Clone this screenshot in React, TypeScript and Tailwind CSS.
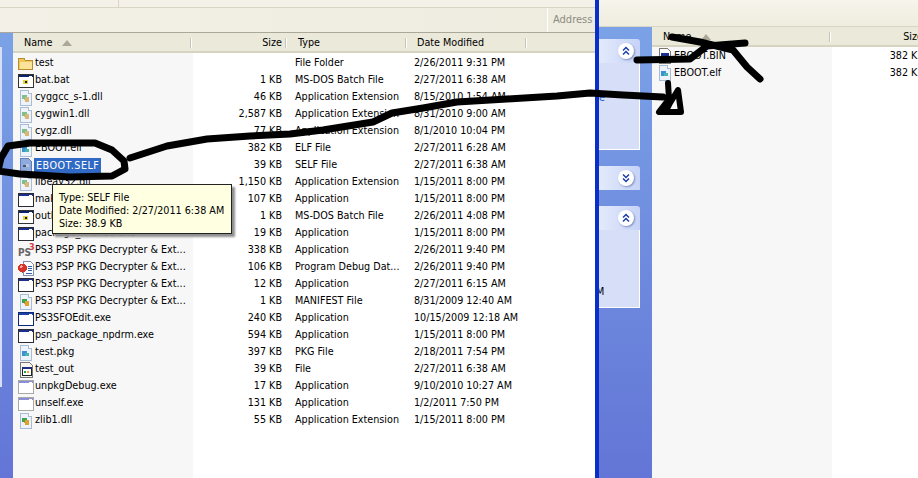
import type { ReactNode } from "react";

type IconKind = "folder" | "bat" | "dll" | "app" | "appGray" | "elf" | "self" | "ps3" | "pdb" | "manifest" | "appDark" | "out" | "bin";

type FileRow = {
  name: string;
  size: string;
  type: string;
  date: string;
  icon: IconKind;
};

const APP_EXT = "Application Extension";
const PKG_TOOL = "PS3 PSP PKG Decrypter & Ext...";

const files: FileRow[] = [
  { name: "test", size: "", type: "File Folder", date: "2/26/2011 9:31 PM", icon: "folder" },
  { name: "bat.bat", size: "1 KB", type: "MS-DOS Batch File", date: "2/27/2011 6:38 AM", icon: "bat" },
  { name: "cyggcc_s-1.dll", size: "46 KB", type: APP_EXT, date: "8/15/2010 1:54 AM", icon: "dll" },
  { name: "cygwin1.dll", size: "2,587 KB", type: APP_EXT, date: "8/31/2010 9:00 AM", icon: "dll" },
  { name: "cygz.dll", size: "77 KB", type: APP_EXT, date: "8/1/2010 10:04 PM", icon: "dll" },
  { name: "EBOOT.elf", size: "382 KB", type: "ELF File", date: "2/27/2011 6:28 AM", icon: "elf" },
  { name: "EBOOT.SELF", size: "39 KB", type: "SELF File", date: "2/27/2011 6:38 AM", icon: "self" },
  { name: "libeay32.dll", size: "1,150 KB", type: APP_EXT, date: "1/15/2011 8:00 PM", icon: "dll" },
  { name: "make_self.exe", size: "107 KB", type: "Application", date: "1/15/2011 8:00 PM", icon: "app" },
  { name: "outlet.bat", size: "1 KB", type: "MS-DOS Batch File", date: "2/26/2011 4:08 PM", icon: "bat" },
  { name: "package_finalize.exe", size: "19 KB", type: "Application", date: "1/15/2011 8:00 PM", icon: "app" },
  { name: PKG_TOOL, size: "338 KB", type: "Application", date: "2/26/2011 9:40 PM", icon: "ps3" },
  { name: PKG_TOOL, size: "106 KB", type: "Program Debug Dat...", date: "2/26/2011 9:40 PM", icon: "pdb" },
  { name: PKG_TOOL, size: "12 KB", type: "Application", date: "2/27/2011 6:15 AM", icon: "app" },
  { name: PKG_TOOL, size: "1 KB", type: "MANIFEST File", date: "8/31/2009 12:40 AM", icon: "manifest" },
  { name: "PS3SFOEdit.exe", size: "240 KB", type: "Application", date: "10/15/2009 12:18 AM", icon: "appDark" },
  { name: "psn_package_npdrm.exe", size: "594 KB", type: "Application", date: "1/15/2011 8:00 PM", icon: "app" },
  { name: "test.pkg", size: "397 KB", type: "PKG File", date: "2/18/2011 7:54 PM", icon: "elf" },
  { name: "test_out", size: "39 KB", type: "File", date: "2/27/2011 6:38 AM", icon: "out" },
  { name: "unpkgDebug.exe", size: "17 KB", type: "Application", date: "9/10/2010 10:27 AM", icon: "appGray" },
  { name: "unself.exe", size: "131 KB", type: "Application", date: "1/2/2011 7:50 PM", icon: "appGray" },
  { name: "zlib1.dll", size: "55 KB", type: APP_EXT, date: "1/15/2011 8:00 PM", icon: "manifest" },
];

const WindowGlyph = ({ border, bar, children }: { border: string; bar: string; children?: ReactNode }) => (
  <>
    <rect x="0.5" y="1.5" width="15" height="13" fill="#fff" stroke={border} />
    <rect x="1" y="2" width="14" height="2" fill={bar} />
    <rect x="11" y="2.5" width="3" height="1" fill="#fff" />
    {children}
  </>
);

const PageGlyph = ({ children }: { children?: ReactNode }) => (
  <>
    <path d="M2.5 .5H10.5L13.5 3.5V15.5H2.5Z" fill="#eef3fb" stroke="#a9bcd6" />
    <path d="M10.5 .5V3.5H13.5" fill="#fff" stroke="#a9bcd6" />
    {children}
  </>
);

const FileIcon = ({ kind }: { kind: IconKind }) => {
  let glyph: ReactNode = null;
  if (kind === "folder") {
    glyph = (
      <>
        <path d="M.5 4.5V2.5H6L7.5 4.5H14.5V13.5H.5Z" fill="#eec65a" stroke="#b58f2c" />
        <path d="M1.5 6H14V13H1.5Z" fill="#fbe39a" />
      </>
    );
  } else if (kind === "bat") {
    glyph = (
      <WindowGlyph border="#333" bar="#0a246a">
        <rect x="5" y="7" width="5" height="4" fill="#e4d44a" />
        <rect x="7" y="8" width="2" height="2" fill="#222" />
      </WindowGlyph>
    );
  } else if (kind === "app") {
    glyph = <WindowGlyph border="#2b2b33" bar="#1c2f8c" />;
  } else if (kind === "appDark") {
    glyph = <WindowGlyph border="#0a2a7a" bar="#1c3fa8" />;
  } else if (kind === "appGray") {
    glyph = <WindowGlyph border="#a9a9a9" bar="#8a8fd6" />;
  } else if (kind === "dll") {
    glyph = (
      <PageGlyph>
        <circle cx="6.5" cy="7" r="2.5" fill="#7fbf8e" />
        <circle cx="9" cy="9.5" r="2.5" fill="#d8b878" />
      </PageGlyph>
    );
  } else if (kind === "manifest") {
    glyph = (
      <PageGlyph>
        <circle cx="6.5" cy="7" r="2.5" fill="#3fa24f" />
        <circle cx="9" cy="9.5" r="2.5" fill="#dfa02c" />
      </PageGlyph>
    );
  } else if (kind === "elf") {
    glyph = (
      <PageGlyph>
        <rect x="4" y="6" width="5" height="5" fill="#3f8fd6" />
        <rect x="7" y="8" width="4" height="3" fill="#46b8a8" />
      </PageGlyph>
    );
  } else if (kind === "self") {
    glyph = (
      <>
        <path d="M2.5 .5H10.5L13.5 3.5V15.5H2.5Z" fill="#8faadc" stroke="#5f7fb8" />
        <rect x="5" y="7" width="3" height="2" fill="#44546f" />
        <rect x="8" y="6" width="3" height="3" fill="#b8c6de" />
      </>
    );
  } else if (kind === "ps3") {
    glyph = (
      <>
        <text x="0" y="13" fontSize="10" fontWeight="700" fill="#666">PS</text>
        <text x="11" y="7" fontSize="9" fontWeight="700" fill="#d8394a">3</text>
      </>
    );
  } else if (kind === "pdb") {
    glyph = (
      <>
        <path d="M5.5 1.5H12.5L15.5 4.5V15.5H5.5Z" fill="#fff" stroke="#7f8fb0" />
        <path d="M10 6H14M10 8H14M10 10H14M8 13H14" stroke="#3a5fa8" />
        <circle cx="4.5" cy="8" r="4.5" fill="#d8342c" />
        <circle cx="3.3" cy="6.6" r="1.3" fill="#f6b0a4" />
      </>
    );
  } else if (kind === "out") {
    glyph = (
      <>
        <path d="M2.5 .5H11.5L14.5 3.5V15.5H2.5Z" fill="#f6f6ee" stroke="#777" />
        <rect x="4" y="5" width="9" height="8" fill="#fff" stroke="#222" strokeWidth="1" />
        <rect x="4" y="5" width="9" height="2" fill="#1c2f8c" />
        <rect x="6" y="9" width="2" height="2" fill="#2b9a4c" />
        <rect x="9" y="9" width="2" height="2" fill="#d8b030" />
      </>
    );
  } else if (kind === "bin") {
    glyph = (
      <>
        <path d="M2.5 .5H10.5L13.5 3.5V15.5H2.5Z" fill="#fff" stroke="#777" />
        <rect x="4" y="5" width="8" height="6" fill="#1c2f8c" />
      </>
    );
  }
  return (
    <svg viewBox="0 0 16 16" className="w-4 h-4 shrink-0 overflow-visible" shapeRendering="crispEdges">
      {glyph}
    </svg>
  );
};

const SortArrow = () => <span className="ml-[10px] w-0 h-0 border-x-[5px] border-x-transparent border-b-[6px] border-b-[#aca899]" />;

const HeaderDivider = () => <span className="absolute right-[1px] top-[3px] bottom-[3px] w-[2px] bg-[#c7c5b2] border-r border-white" />;

const Row = ({ file }: { file: FileRow }) => {
  const selected = file.name === "EBOOT.SELF";
  return (
    <div className="flex h-[17px] items-center">
      <div className="w-[180px] flex items-center pl-[5px] h-full whitespace-nowrap overflow-hidden">
        <FileIcon kind={file.icon} />
        <span className={selected ? "px-[2px] h-[16px] leading-[16px] bg-[#316ac5] text-white tracking-[0.5px]" : "px-[1px]"}>{file.name}</span>
      </div>
      <div className="w-[89px] text-right">{file.size}</div>
      <div className="w-[126px] pl-[13px] whitespace-nowrap">{file.type}</div>
      <div className="w-[120px] pl-[6px] whitespace-nowrap">{file.date}</div>
    </div>
  );
};

const Chevrons = ({ up }: { up: boolean }) => (
  <span className="w-[16px] h-[16px] rounded-full bg-white shadow-[1px_1px_2px_#7f8fc0] flex items-center justify-center">
    <svg viewBox="0 0 10 10" className="w-[10px] h-[10px]" fill="none" stroke="#1c3fa8" strokeWidth="1.5">
      {up ? <path d="M2 4.5 5 1.5 8 4.5M2 8.5 5 5.5 8 8.5" /> : <path d="M2 1.5 5 4.5 8 1.5M2 5.5 5 8.5 8 5.5" />}
    </svg>
  </span>
);

const TaskPanel = ({ up, bodyHeight, children }: { up: boolean; bodyHeight: number; children?: ReactNode }) => (
  <div className="w-[41px]">
    <div className="h-[24px] rounded-tr-[3px] bg-linear-to-r from-[#e3eafb] to-[#c6d3f7] flex items-center justify-end pr-[6px] pb-[1px]">
      <Chevrons up={up} />
    </div>
    {up && (
      <div className="bg-[#d6dff7] border-r border-b border-white text-[#000] overflow-hidden relative" style={{ height: bodyHeight }}>
        {children}
      </div>
    )}
  </div>
);

const Scribbles = () => (
  <svg viewBox="0 0 918 478" className="absolute inset-0 w-[918px] h-[478px] pointer-events-none" fill="none" stroke="#000" strokeLinecap="round" strokeLinejoin="round">
    <path strokeWidth="7" d="M-2 171 1 158 8 146 30 143 95 143 112 150 124 161 125 169 112 176 70 177 20 174-2 171" />
    <path strokeWidth="7" d="M130 158 167 146 207 139 250 136 290 134 323 130 373 122 392 113 423 108 457 102 507 99 557 96 590 93 623 95 663 97" />
    <path strokeWidth="6" d="M668 83 669 99 659 112 681 112 678 90 670 103 667 109" />
    <path strokeWidth="7" d="M637 60 690 59 707 46 745 43" />
    <path strokeWidth="7" d="M672 37 700 42 733 50 747 67 760 79" />
  </svg>
);

const App = () => {
  return (
    <div className="relative w-[918px] h-[478px] overflow-hidden flex bg-white text-[10.7px] text-black font-['DejaVu_Sans_Condensed','DejaVu_Sans',sans-serif]">
      {/* left explorer window */}
      <div className="w-[595px] h-full flex flex-col shrink-0">
        <div className="h-[8px] bg-[#f4f2e8] border-b border-[#d8d5c4] flex">
          <div className="w-[119px] border-r border-[#d8d5c4]" />
        </div>
        <div className="h-[25px] bg-linear-to-r from-[#f3f1e7] to-[#eeecdf] border-b border-[#aca899] flex justify-end">
          <div className="w-[48px] border-l border-white text-[#8d8b80] text-[11px] leading-[24px] pl-[5px]">Address</div>
        </div>
        <div className="flex-1 flex min-h-0">
          <div className="w-[13px] pt-[14px] bg-linear-to-b from-[#7ba2e7] to-[#6375d6]">
            <div className="w-[2px] h-[340px] bg-[#d6dff7]" />
          </div>
          <div className="flex-1 min-w-0">
            <div className="h-[20px] pt-[2px] bg-[#ebe9d9] border-b-2 border-[#d6d3c1] flex items-center">
              <div className="relative w-[180px] h-full flex items-center pl-[11px]">
                Name
                <SortArrow />
                <HeaderDivider />
              </div>
              <div className="relative w-[95px] h-full flex items-center justify-end pr-[6px]">
                Size
                <HeaderDivider />
              </div>
              <div className="relative w-[120px] h-full flex items-center pl-[10px]">
                Type
                <HeaderDivider />
              </div>
              <div className="relative w-[120px] h-full flex items-center pl-[9px]">
                Date Modified
                <HeaderDivider />
              </div>
            </div>
            <div className="relative h-full bg-white pt-[2px]">
              <div className="absolute left-0 top-0 bottom-0 w-[180px] bg-[#f7f7f7]" />
              <div className="relative">
                {files.map((file, i) => (
                  <Row key={i} file={file} />
                ))}
              </div>
            </div>
          </div>
        </div>
      </div>

      {/* window edge */}
      <div className="w-[4px] h-full shrink-0 bg-[#0a2fc8]" />

      {/* right explorer window */}
      <div className="flex-1 h-full min-w-0 flex flex-col">
        <div className="h-[27px] bg-linear-to-b from-[#f6f4ec] to-[#efeddf] border-b border-[#d8d5c4]" />
        <div className="flex-1 flex min-h-0">
          <div className="w-[53px] pt-[12px] bg-linear-to-b from-[#7ba2e7] to-[#6375d6] flex flex-col gap-[16px]">
            <TaskPanel up bodyHeight={87}>
              <span className="block mt-[28px] text-[#215dc6] leading-[14px] -ml-[6px]">ne</span>
            </TaskPanel>
            <TaskPanel up={false} bodyHeight={0} />
            <TaskPanel up bodyHeight={78}>
              <span className="absolute top-[54px] -left-[3px]">M</span>
            </TaskPanel>
          </div>
          <div className="flex-1 min-w-0 overflow-hidden">
            <div className="h-[20px] pt-[2px] w-[300px] bg-[#ebe9d9] border-b-2 border-[#d6d3c1] flex items-center">
              <div className="relative w-[180px] h-full flex items-center pl-[11px]">
                Name
                <SortArrow />
                <HeaderDivider />
              </div>
              <div className="w-[91px] text-right">Size</div>
            </div>
            <div className="relative h-full pt-[1px]">
              <div className="absolute left-0 top-0 bottom-0 w-[180px] bg-[#f7f7f7]" />
              <div className="relative w-[300px]">
                {[
                  { name: "EBOOT.BIN", icon: "bin" as IconKind },
                  { name: "EBOOT.elf", icon: "elf" as IconKind },
                ].map((f) => (
                  <div key={f.name} className="flex h-[17px] items-center">
                    <div className="w-[180px] flex items-center pl-[5px]">
                      <FileIcon kind={f.icon} />
                      <span className="px-[1px]">{f.name}</span>
                    </div>
                    <div className="w-[92px] text-right">382 KB</div>
                  </div>
                ))}
              </div>
            </div>
          </div>
        </div>
      </div>

      {/* tooltip */}
      <div className="absolute left-[52px] top-[184px] w-[180px] h-[50px] bg-[#ffffe1] border border-[#222] shadow-[3px_3px_2px_#8f8f8f] pl-[6px] pt-[6px] whitespace-nowrap flex flex-col">
        <div className="h-[13px] leading-[13px]">Type: SELF File</div>
        <div className="h-[13px] leading-[13px]">Date Modified: 2/27/2011 6:38 AM</div>
        <div className="h-[13px] leading-[13px]">Size: 38.9 KB</div>
      </div>

      <Scribbles />
    </div>
  );
};

export default App;
